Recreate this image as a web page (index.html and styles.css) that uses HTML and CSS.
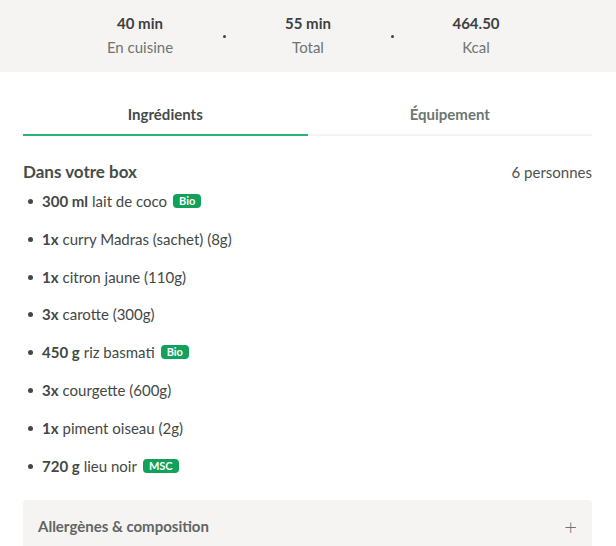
FILE: index.html
```html
<!DOCTYPE html>
<html lang="fr">
<head>
    <meta charset="UTF-8">
    <meta name="viewport" content="width=device-width, initial-scale=1.0">
    <title>Recette</title>
    <link rel="stylesheet" href="styles.css">
</head>
<body>
    <div class="stats">
        <div class="stat">
            <strong>40 min</strong>
            <span>En cuisine</span>
        </div>
        <div class="dot"></div>
        <div class="stat">
            <strong>55 min</strong>
            <span>Total</span>
        </div>
        <div class="dot"></div>
        <div class="stat">
            <strong>464.50</strong>
            <span>Kcal</span>
        </div>
    </div>

    <div class="content">
        <div class="tabs">
            <div class="tab active">Ingrédients</div>
            <div class="tab">Équipement</div>
        </div>

        <div class="box-head">
            <h2>Dans votre box</h2>
            <span class="people">6 personnes</span>
        </div>
        <ul class="ingredients">
            <li><b>300 ml</b> lait de coco <span class="badge">Bio</span></li>
            <li><b>1x</b> curry Madras (sachet) (8g)</li>
            <li><b>1x</b> citron jaune (110g)</li>
            <li><b>3x</b> carotte (300g)</li>
            <li><b>450 g</b> riz basmati <span class="badge">Bio</span></li>
            <li><b>3x</b> courgette (600g)</li>
            <li><b>1x</b> piment oiseau (2g)</li>
            <li><b>720 g</b> lieu noir <span class="badge">MSC</span></li>
        </ul>

        <div class="accordion">
            <span>Allergènes &amp; composition</span>
            <span class="plus">+</span>
        </div>
    </div>
</body>
</html>
```

FILE: styles.css
```css
body {
    margin: 0;
    font-family: Lato, "Open Sans", sans-serif;
    color: #3f4442;
    background: #fff;
}
.stats {
    background: #f5f4f2;
    height: 72px;
    display: flex;
    justify-content: center;
    align-items: center;
    box-sizing: border-box;
    padding-bottom: 2px;
}
.stat {
    width: 168px;
    display: flex;
    flex-direction: column;
    align-items: center;
    font-size: 15px;
    line-height: 24px;
}
.stat strong {
    color: #3d413f;
    font-weight: 700;
}
.stat span {
    color: #6d7573;
}
.dot {
    width: 0;
    display: flex;
    justify-content: center;
}
.dot::before {
    content: "";
    flex: none;
    width: 3px;
    height: 3px;
    border-radius: 50%;
    background: #3d413f;
    margin-top: 3px;
}
.content {
    padding: 0 24px 0 23px;
}
.tabs {
    display: flex;
    margin-top: 31px;
}
.tab {
    flex: 1;
    text-align: center;
    font-size: 15px;
    font-weight: 700;
    color: #6d7573;
    padding-bottom: 9px;
    border-bottom: 2px solid #f3f3f3;
    line-height: 22px;
}
.tab.active {
    color: #464b49;
    border-bottom-color: #2bb673;
}
.box-head {
    display: flex;
    justify-content: space-between;
    align-items: baseline;
    margin-top: 24px;
}
.box-head h2 {
    margin: 0;
    font-size: 17px;
    font-weight: 700;
    color: #474c4a;
    line-height: 24px;
}
.people {
    font-size: 15px;
    color: #4d5250;
}
.ingredients {
    list-style: none;
    margin: 7px 0 0;
    padding: 0 0 0 5px;
}
.ingredients li {
    font-size: 15px;
    line-height: 20px;
    color: #434846;
    margin-bottom: 18px;
    display: flex;
    align-items: center;
}
.ingredients li:nth-child(3) {
    margin-bottom: 17px;
}
.ingredients li:last-child {
    margin-bottom: 0;
}
.ingredients li::before {
    content: "";
    width: 5px;
    height: 5px;
    border-radius: 50%;
    background: #434846;
    margin-right: 9px;
}
.ingredients li b {
    font-weight: 700;
    margin-right: 4px;
}
.badge {
    background: #12a15a;
    color: #fff;
    font-size: 11px;
    font-weight: 700;
    line-height: 14px;
    padding: 0 6px;
    border-radius: 4px;
    margin-left: 6px;
}
.accordion {
    background: #f5f4f2;
    border-radius: 4px 4px 0 0;
    display: flex;
    justify-content: space-between;
    align-items: center;
    height: 52px;
    padding: 0 15px;
    margin-top: 24px;
    font-size: 15px;
    font-weight: 700;
    color: #5f6664;
}
.plus {
    font-weight: 300;
    font-size: 22px;
    color: #6d7573;
}
```
